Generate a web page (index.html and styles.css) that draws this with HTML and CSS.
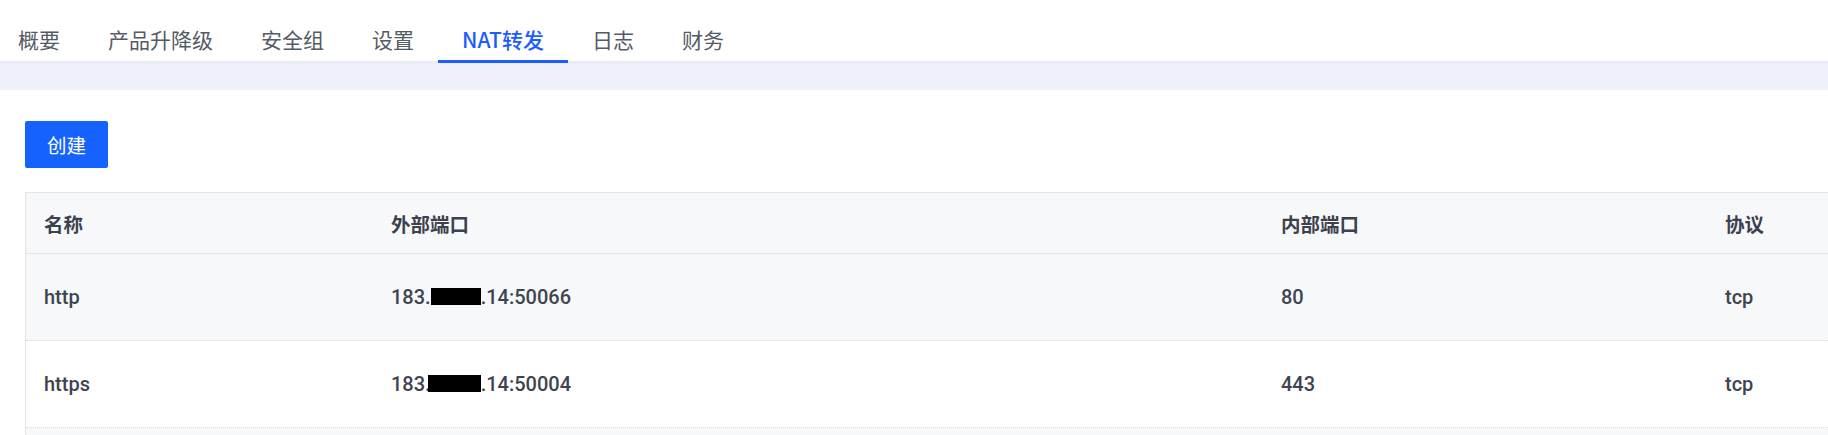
FILE: index.html
```html
<!DOCTYPE html>
<html lang="zh-CN">
<head>
<meta charset="utf-8">
<title>NAT转发</title>
<link rel="stylesheet" href="styles.css">
</head>
<body>
<nav class="tabs">
  <a class="tab">概要</a>
  <a class="tab">产品升降级</a>
  <a class="tab">安全组</a>
  <a class="tab">设置</a>
  <a class="tab active">NAT转发</a>
  <a class="tab">日志</a>
  <a class="tab">财务</a>
</nav>
<div class="band"></div>
<main class="content">
  <button class="btn-primary">创建</button>
  <div class="table">
    <div class="row head">
      <div class="cell">名称</div>
      <div class="cell">外部端口</div>
      <div class="cell">内部端口</div>
      <div class="cell">协议</div>
    </div>
    <div class="row odd">
      <div class="cell">http</div>
      <div class="cell">183.<span class="redact"></span>.14:50066</div>
      <div class="cell">80</div>
      <div class="cell">tcp</div>
    </div>
    <div class="row">
      <div class="cell">https</div>
      <div class="cell">183.<span class="redact wide"></span>.14:50004</div>
      <div class="cell">443</div>
      <div class="cell">tcp</div>
    </div>
    <div class="row odd">
      <div class="cell"></div>
      <div class="cell"></div>
      <div class="cell"></div>
      <div class="cell"></div>
    </div>
  </div>
</main>
</body>
</html>
```

FILE: styles.css
```css
html, body {
  margin: 0;
  padding: 0;
  background: #ffffff;
  overflow: hidden;
}

body {
  height: 100vh;
  display: flex;
  flex-direction: column;
  font-family: Roboto, "Noto Sans CJK SC", sans-serif;
  color: #3e4450;
}

.tabs {
  display: flex;
  flex: none;
  height: 61px;
  background: #ffffff;
}

.tab {
  position: relative;
  box-sizing: border-box;
  height: 61px;
  padding: 24px 24px 0;
  font-family: "Noto Sans CJK SC", sans-serif;
  font-size: 21px;
  line-height: 30px;
  color: #555b65;
  white-space: nowrap;
  cursor: pointer;
}

.tab:first-child {
  padding-left: 18px;
}

.tab.active {
  color: #1a5dff;
  font-weight: 500;
}

.tab.active::after {
  content: "";
  position: absolute;
  left: 0;
  right: 0;
  bottom: -2px;
  height: 3px;
  background: #1a5dff;
  z-index: 2;
}

.band {
  flex: none;
  height: 29px;
  background: linear-gradient(#e7eaf2 0, #eef1f9 4px, #eef1f9 100%);
}

.content {
  flex: 1;
  min-height: 0;
  overflow: hidden;
  padding: 31px 0 0 25px;
}

.btn-primary {
  display: block;
  width: 83px;
  height: 47px;
  border: none;
  border-radius: 2px;
  background: #1662ff;
  color: #ffffff;
  font-family: "Noto Sans CJK SC", sans-serif;
  font-size: 19.5px;
  padding: 0;
  cursor: pointer;
}

.table {
  margin-top: 24px;
  border-left: 1px solid #e1e5ee;
  border-top: 1px solid #e1e5ee;
}

.row {
  display: grid;
  grid-template-columns: 347px 890px 444px 1fr;
  height: 87px;
  align-items: center;
  border-bottom: 1px dotted #d6dbe5;
  box-sizing: border-box;
  font-size: 20px;
  font-weight: 500;
  color: #3e4450;
}

.row.head {
  height: 61px;
  background: #f7f8fa;
  border-bottom: 1px solid #e1e5ee;
  font-family: "Noto Sans CJK SC", sans-serif;
  font-size: 19.5px;
  font-weight: 700;
  color: #3c424d;
}

.row.odd {
  background: #f7f8fa;
}

.cell {
  padding-left: 18px;
  white-space: nowrap;
}

.redact {
  display: inline-block;
  width: 50px;
  height: 17px;
  background: #000000;
  vertical-align: -1px;
}

.redact.wide {
  width: 53px;
  margin-left: -3px;
}
```
